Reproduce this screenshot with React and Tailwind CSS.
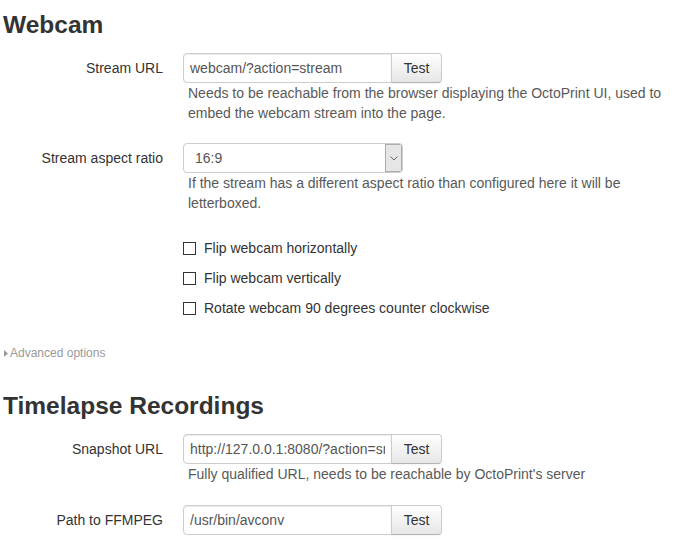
import React from "react";

function Label({ children }) {
  return (
    <div className="w-[160px] shrink-0 text-right pt-[5px] leading-5 text-[#333]">
      {children}
    </div>
  );
}

function InputAppend({ value }) {
  return (
    <div className="flex h-[30px]">
      <input
        readOnly
        value={value}
        className="w-[209px] h-[30px] border border-[#ccc] rounded-l-[4px] px-[6px] py-[4px] text-[14px] leading-5 text-[#555] bg-white shadow-[inset_0_1px_1px_rgba(0,0,0,0.075)] outline-none"
      />
      <div className="-ml-px w-[51px] h-[30px] border border-[#ccc] border-b-[#b3b3b3] rounded-r-[4px] bg-linear-to-b from-white to-[#e6e6e6] text-center leading-5 py-[4px] text-[#333] shadow-[inset_0_1px_0_rgba(255,255,255,0.2),0_1px_2px_rgba(0,0,0,0.05)]">
        Test
      </div>
    </div>
  );
}

function Help({ children }) {
  return <div className="pl-[5px] pr-[10px] leading-5 text-[#595959]">{children}</div>;
}

function Check({ children }) {
  return (
    <div className="flex items-center h-[30px]">
      <div className="w-[13px] h-[13px] border border-[#333] bg-white shrink-0" />
      <span className="ml-[8px] text-[#333]">{children}</span>
    </div>
  );
}

export default function App() {
  return (
    <div className="w-[685px] h-[542px] overflow-hidden bg-white pl-[3px] font-['Liberation_Sans',Arial,sans-serif] text-[14px] leading-5 text-[#333]">
      <h3 className="text-[24.5px] font-bold leading-10 pt-[5px] mb-[8px] text-[#333]">Webcam</h3>

      <div className="flex mb-[20px]">
        <Label>Stream URL</Label>
        <div className="ml-[20px] flex-1">
          <InputAppend value="webcam/?action=stream" />
          <Help>
            Needs to be reachable from the browser displaying the OctoPrint UI, used to embed the webcam
            stream into the page.
          </Help>
        </div>
      </div>

      <div className="flex mb-[20px]">
        <Label>Stream aspect ratio</Label>
        <div className="ml-[20px] flex-1">
          <div className="flex w-[220px] h-[30px] border border-[#ccc] rounded-[4px] overflow-hidden bg-white">
            <div className="flex-1 pl-[11px] leading-[28px] text-[#555]">16:9</div>
            <div className="w-[17px] h-full border border-[#adadad] bg-[#e6e6e6] flex items-center justify-center">
              <svg width="8" height="5" viewBox="0 0 8 5">
                <path d="M0.5 0.5 L4 4 L7.5 0.5" fill="none" stroke="#666" strokeWidth="1" />
              </svg>
            </div>
          </div>
          <Help>
            If the stream has a different aspect ratio than configured here it will be letterboxed.
          </Help>
        </div>
      </div>

      <div className="ml-[180px]">
        <Check>Flip webcam horizontally</Check>
        <Check>Flip webcam vertically</Check>
        <Check>Rotate webcam 90 degrees counter clockwise</Check>
      </div>

      <div className="mt-[20px] flex items-center h-5 text-[12px] text-[#999]">
        <svg width="4" height="7" viewBox="0 0 4 7" className="ml-[1px]">
          <path d="M0 0 L4 3.5 L0 7 Z" fill="#999" />
        </svg>
        <span className="ml-[2px]">Advanced options</span>
      </div>

      <h3 className="mt-[23px] text-[24.5px] font-bold leading-10 mb-[8px] text-[#333]">
        Timelapse Recordings
      </h3>

      <div className="flex mb-[21px]">
        <Label>Snapshot URL</Label>
        <div className="ml-[20px] flex-1">
          <InputAppend value="http://127.0.0.1:8080/?action=snapshot" />
          <Help>Fully qualified URL, needs to be reachable by OctoPrint's server</Help>
        </div>
      </div>

      <div className="flex mb-[20px]">
        <Label>Path to FFMPEG</Label>
        <div className="ml-[20px] flex-1">
          <InputAppend value="/usr/bin/avconv" />
        </div>
      </div>
    </div>
  );
}
